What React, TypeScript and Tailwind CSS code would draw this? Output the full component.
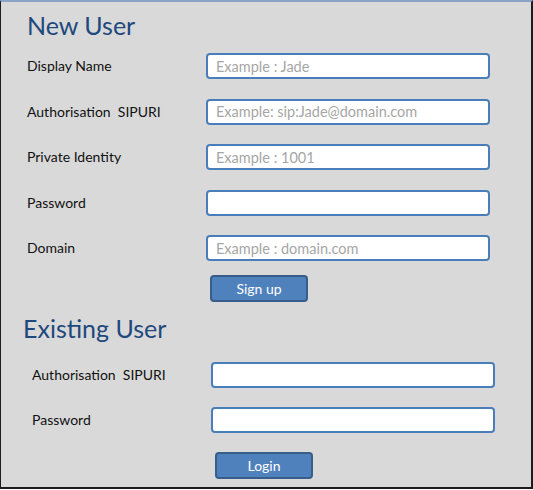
import type { ReactNode } from "react";

const FONT = "font-['Lato','Open_Sans','Liberation_Sans',sans-serif]";

function Field({ label, placeholder }: { label: ReactNode; placeholder?: string }) {
  return (
    <>
      <label className="text-[14px] leading-none text-[#111] whitespace-pre">{label}</label>
      <input
        type="text"
        placeholder={placeholder}
        className="h-[26px] w-[284px] rounded-[4px] border-2 border-[#4a7ebb] bg-white px-[8px] text-[14.5px] text-[#222] outline-none placeholder:text-[#a6a6a6]"
      />
    </>
  );
}

function ActionButton({ children }: { children: ReactNode }) {
  return (
    <button
      type="button"
      className="h-[27px] w-[98px] rounded-[4px] border-2 border-[#385d8a] bg-[#4f81bd] text-[14px] leading-none text-white"
    >
      {children}
    </button>
  );
}

export default function App() {
  return (
    <div className={`h-[490px] w-[533px] bg-white ${FONT}`}>
      <div className="flex h-[489px] flex-col border-t-2 border-t-[#8aa4c6] border-l border-r-2 border-b-2 border-[#1c1c1c] bg-[#d9d9d9]">
        {/* New user */}
        <section className="pl-[26px] pt-[6px]">
          <h1 className="text-[25px] leading-[34px] text-[#1f497d]">New User</h1>
          <div className="mt-[11px] grid grid-cols-[179px_284px] items-center gap-y-[19.5px]">
            <Field label="Display Name" placeholder="Example : Jade" />
            <Field label="Authorisation  SIPURI" placeholder="Example: sip:Jade@domain.com" />
            <Field label="Private Identity" placeholder="Example : 1001" />
            <Field label="Password" />
            <Field label="Domain" placeholder="Example : domain.com" />
          </div>
          <div className="mt-[14px] pl-[183px]">
            <ActionButton>Sign up</ActionButton>
          </div>
        </section>

        {/* Existing user */}
        <section className="pt-[9px]">
          <h2 className="pl-[22px] text-[25px] leading-[34px] text-[#1f497d]">Existing User</h2>
          <div className="mt-[17px] grid grid-cols-[179px_284px] items-center gap-y-[19px] pl-[31px]">
            <Field label="Authorisation  SIPURI" />
            <Field label="Password" />
          </div>
          <div className="mt-[19px] pl-[214px]">
            <ActionButton>Login</ActionButton>
          </div>
        </section>
      </div>
    </div>
  );
}
